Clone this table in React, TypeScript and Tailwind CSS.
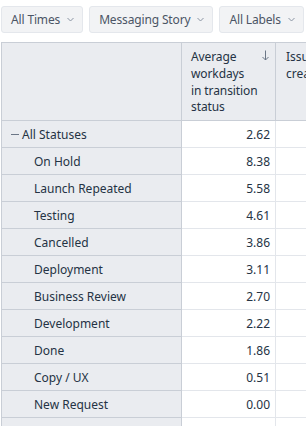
import React from "react";

const rows: [string, string][] = [
  ["On Hold", "8.38"],
  ["Launch Repeated", "5.58"],
  ["Testing", "4.61"],
  ["Cancelled", "3.86"],
  ["Deployment", "3.11"],
  ["Business Review", "2.70"],
  ["Development", "2.22"],
  ["Done", "1.86"],
  ["Copy / UX", "0.51"],
  ["New Request", "0.00"],
];

function Chevron() {
  return (
    <svg width="7" height="5" viewBox="0 0 7 5" fill="none" aria-hidden="true">
      <path d="M0.5 1l3 3 3-3" stroke="#8a94a3" strokeWidth="1" />
    </svg>
  );
}

function Filter({ label }: { label: string }) {
  return (
    <button className="flex h-[27px] shrink-0 items-center gap-[7px] rounded-[3px] border border-[#e4e7ec] bg-[#f2f3f5] pl-[9px] pr-[8px] text-[12px] tracking-[-0.15px] text-[#4b5565]">
      {label}
      <Chevron />
    </button>
  );
}

export default function App() {
  return (
    <div className="h-[426px] w-[306px] overflow-hidden bg-white font-['Noto_Sans',sans-serif] text-[#253344]">
      <div className="flex gap-[6px] pl-[1px] pt-[6px]">
        <Filter label="All Times" />
        <Filter label="Messaging Story" />
        <Filter label="All Labels" />
      </div>

      <div className="ml-[1px] mt-[9px] w-[400px] border-t border-l border-[#c9ced6]">
        <div className="flex h-[78px] bg-[#eaecf0]">
          <div className="w-[180px] shrink-0 border-r border-b border-[#c9ced6]" />
          <div className="relative w-[94px] shrink-0 border-r border-b border-[#c9ced6] pl-[9px] pt-[6px] text-[12px] leading-[16.8px] tracking-[-0.1px]">
            Average
            <br />
            workdays
            <br />
            in transition
            <br />
            status
            <svg
              className="absolute right-[6px] top-[7px]"
              width="7"
              height="11"
              viewBox="0 0 7 11"
              fill="none"
              aria-hidden="true"
            >
              <path d="M3.5 0.5v9.5M0.5 7l3 3 3-3" stroke="#6b7686" strokeWidth="1" />
            </svg>
          </div>
          <div className="flex-1 border-b border-[#c9ced6] pl-[10px] pt-[6px] text-[12px] leading-[16.8px]">
            Issues
            <br />
            created
          </div>
        </div>

        <div className="flex h-[27px] text-[12px]">
          <div className="flex w-[180px] shrink-0 items-center border-r border-b border-[#c9ced6] bg-[#eaecf0] pl-[9px] pt-px">
            <span className="mr-[3px] h-px w-[8px] bg-[#6b7686]" />
            All Statuses
          </div>
          <div className="flex w-[94px] shrink-0 items-center justify-end border-r border-b border-[#e3e6eb] pr-[5px] pt-px">
            2.62
          </div>
          <div className="flex-1 border-b border-[#e3e6eb]" />
        </div>

        {rows.map(([name, value]) => (
          <div key={name} className="flex h-[27px] text-[12px]">
            <div className="flex w-[180px] shrink-0 items-center border-r border-b border-[#c9ced6] bg-[#eaecf0] pl-[32px] pt-px">
              {name}
            </div>
            <div className="flex w-[94px] shrink-0 items-center justify-end border-r border-b border-[#e3e6eb] pr-[5px] pt-px">
              {value}
            </div>
            <div className="flex-1 border-b border-[#e3e6eb]" />
          </div>
        ))}

        <div className="flex h-[27px]">
          <div className="w-[180px] shrink-0 border-r border-[#c9ced6] bg-[#eaecf0]" />
          <div className="w-[94px] shrink-0 border-r border-[#e3e6eb]" />
          <div className="flex-1" />
        </div>
      </div>
    </div>
  );
}
